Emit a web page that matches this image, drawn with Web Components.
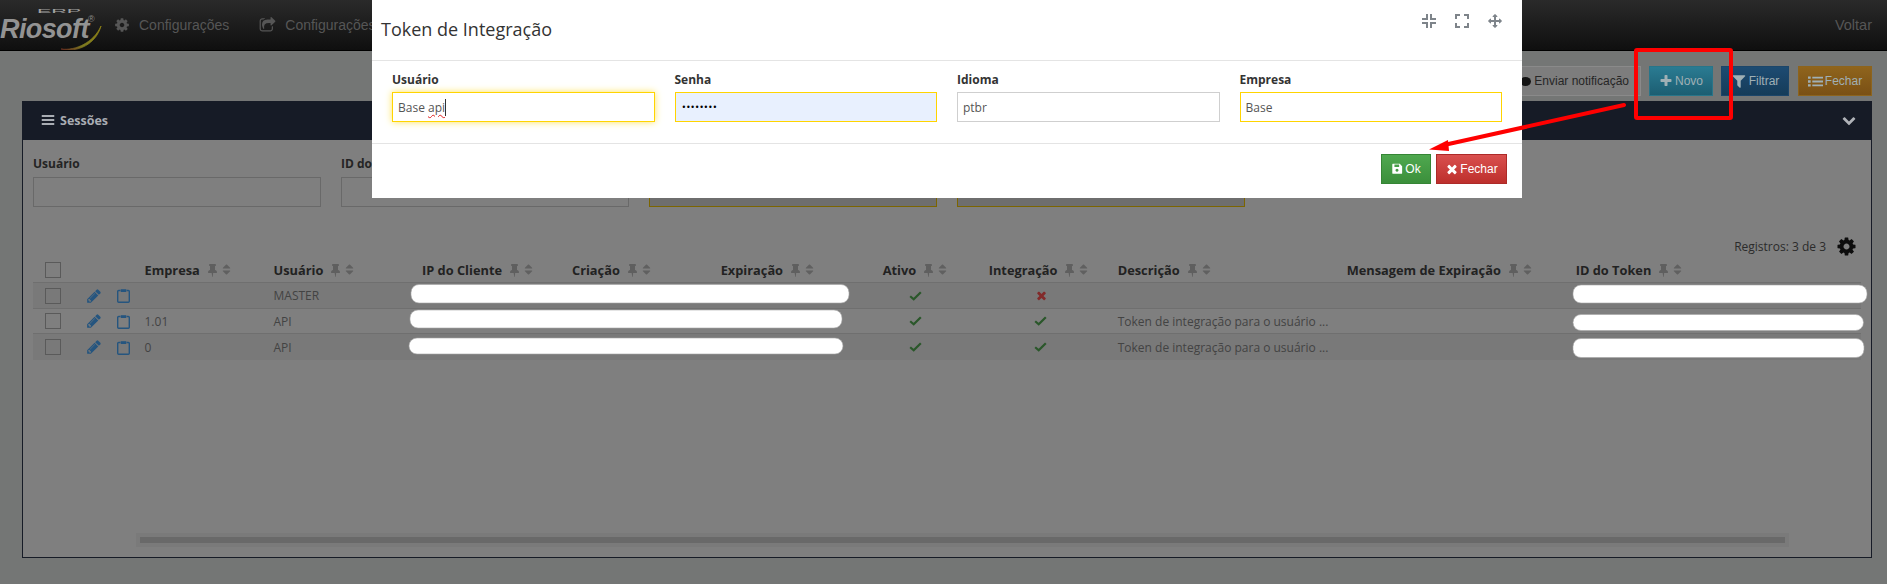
<!DOCTYPE html>
<html lang="pt-BR">
<head>
<meta charset="utf-8">
<title>Sessões</title>
<style>
    html, body { margin: 0; padding: 0; height: 100%; overflow: hidden; background: #747675; }
    body { font-family: "Open Sans", "Liberation Sans", sans-serif; }
    erp-app { display: block; }
</style>
</head>
<body>
<erp-app></erp-app>
<token-modal></token-modal>
<markup-layer></markup-layer>

<script>
    // FontAwesome-ish glyphs, [viewBox width, path]
const GLYPHS = {
    cog: [1792, "M1152 896q0-106-75-181t-181-75-181 75-75 181 75 181 181 75 181-75 75-181zm512-109v222q0 12-8 23t-20 13l-185 28q-19 54-39 91 35 50 107 138 10 12 10 25t-9 23q-27 37-99 108t-94 71q-12 0-26-9l-138-108q-44 23-91 38-16 136-29 186-7 28-36 28h-222q-14 0-24.500-8.500t-11.500-21.500l-28-184q-49-16-90-37l-141 107q-10 9-25 9-14 0-25-11-126-114-165-168-7-10-7-23 0-12 8-23 15-21 51-66.500t54-70.500q-27-50-41-99l-183-27q-13-2-21-12.500t-8-23.500v-222q0-12 8-23t19-13l186-28q14-46 39-92-40-57-107-138-10-12-10-24 0-10 9-23 26-36 98.500-107.500t94.500-71.500q13 0 26 10l138 107q44-23 91-38 16-136 29-186 7-28 36-28h222q14 0 24.500 8.500t11.500 21.500l28 184q49 16 90 37l142-107q9-9 24-9 13 0 25 10 129 119 165 170 7 8 7 22 0 12-8 23-15 21-51 66.500t-54 70.500q26 50 41 98l183 28q13 2 21 12.500t8 23.500z"],
    share: [1792, "M1472 989v259q0 119-84.500 203.500t-203.500 84.500h-832q-119 0-203.500-84.500t-84.500-203.500v-832q0-119 84.500-203.500t203.500-84.500h255q13 0 22.500 9.500t9.500 22.500q0 27-26 32-77 26-133 60-10 4-16 4h-112q-66 0-113 47t-47 113v832q0 66 47 113t113 47h832q66 0 113-47t47-113v-214q0-19 18-29 28-13 54-37 16-16 35-8 21 9 21 29zm237-496l-384 384q-18 19-45 19-12 0-25-5-39-17-39-59v-192h-160q-323 0-438 131-119 137-74 473 3 23-20 34-8 2-12 2-16 0-26-13-10-14-21-31t-39.500-68.500-49.500-99.500-38.500-114-17.500-122q0-49 3.500-91t14-90 28-88 47-81.500 68.500-74 94.500-61.500 124.500-48.500 159.500-30.500 196.500-11h160v-192q0-42 39-59 13-5 25-5 26 0 45 19l384 384q19 19 19 45t-19 45z"],
    pencil: [1792, "M491 1536l91-91-235-235-91 91v107h128v128h107zm523-928q0-22-22-22-10 0-17 7l-542 542q-7 7-7 17 0 22 22 22 10 0 17-7l542-542q7-7 7-17zm-54-192l416 416-832 832h-416v-416zm683 96q0 53-37 90l-166 166-416-416 166-165q36-38 90-38 53 0 91 38l235 234q37 39 37 91z"],
    times: [1792, "M1490 1322q0 40-28 68l-136 136q-28 28-68 28t-68-28l-294-294-294 294q-28 28-68 28t-68-28l-136-136q-28-28-28-68t28-68l294-294-294-294q-28-28-28-68t28-68l136-136q28-28 68-28t68 28l294 294 294-294q28-28 68-28t68 28l136 136q28 28 28 68t-28 68l-294 294 294 294q28 28 28 68z"],
    filter: [1792, "M1595 295q17 41-14 70l-493 493v742q0 42-39 59-13 5-25 5-27 0-45-19l-256-256q-19-19-19-45v-486l-493-493q-31-29-14-70 17-39 59-39h1280q42 0 59 39z"],
    chevron: [1792, "M1683 808l-742 741q-19 19-45 19t-45-19l-742-741q-19-19-19-45.500t19-45.500l166-165q19-19 45-19t45 19l531 531 531-531q19-19 45-19t45 19l166 165q19 19 19 45.500t-19 45.500z"],
    pin: [1152, "M1152 1216q0 26-19 45t-45 19h-429l-51 483q-2 12-10.500 20.500t-20.500 8.500h-1q-27 0-32-27l-76-485h-404q-26 0-45-19t-19-45q0-123 78.500-221.500t177.500-98.500v-512q-52 0-90-38t-38-90 38-90 90-38h640q52 0 90 38t38 90-38 90-90 38v512q99 0 177.500 98.500t78.500 221.500z"],
    sort: [1792, "M1408 1088q0 26-19 45l-448 448q-19 19-45 19t-45-19l-448-448q-19-19-19-45t19-45 45-19h896q26 0 45 19t19 45zm0-384q0 26-19 45t-45 19h-896q-26 0-45-19t-19-45 19-45l448-448q19-19 45-19t45 19l448 448q19 19 19 45z"],
    arrows: [1792, "M1792 896q0 26-19 45l-256 256q-19 19-45 19t-45-19-19-45v-128h-384v384h128q26 0 45 19t19 45-19 45l-256 256q-19 19-45 19t-45-19l-256-256q-19-19-19-45t19-45 45-19h128v-384h-384v128q0 26-19 45t-45 19-45-19l-256-256q-19-19-19-45t19-45l256-256q19-19 45-19t45 19 19 45v128h384v-384h-128q-26 0-45-19t-19-45 19-45l256-256q19-19 45-19t45 19l256 256q19 19 19 45t-19 45-45 19h-128v384h384v-128q0-26 19-45t45-19 45 19l256 256q19 19 19 45z"],
    save: [1792, "M256 128h1056l352 352v1056q0 64-64 64H256q-64 0-64-64V192q0-64 64-64zm256 96v352q0 32 32 32h640q32 0 32-32V224zm384 640a224 224 0 1 0 .1 0z"],
    plus: [1792, "M1600 736v192q0 40-28 68t-68 28h-416v416q0 40-28 68t-68 28h-192q-40 0-68-28t-28-68v-416h-416q-40 0-68-28t-28-68v-192q0-40 28-68t68-28h416v-416q0-40 28-68t68-28h192q40 0 68 28t28 68v416h416q40 0 68 28t28 68z"],
    list: [1792, "M0 288h320v288H0zM512 320h1280v224H512zM0 752h320v288H0zM512 784h1280v224H512zM0 1216h320v288H0zM512 1248h1280v224H512z"],
    bars: [1792, "M96 256h1600v256H96zM96 768h1600v256H96zM96 1280h1600v256H96z"]
}

class FaIcon extends HTMLElement {
    constructor() {
        super();
        this.attachShadow({mode: "open"})
        let [w, d] = GLYPHS[this.getAttribute("name")]
        let size = this.getAttribute("size") || 14
        let width = size * w / 1792
        this.shadowRoot.innerHTML = `
        <style>
            :host { display: inline-flex; color: inherit; flex: none; }
            svg { display: block; fill: currentColor; }
        </style>
        <svg width="${width}" height="${size}" viewBox="0 0 ${w} 1792"><path fill-rule="evenodd" d="${d}"/></svg>`
    }
}
customElements.define("fa-icon", FaIcon);

class ErpTopbar extends HTMLElement {
    constructor() {
        super();
        this.attachShadow({mode: "open"})
        this.shadowRoot.innerHTML = `
        <style>
            :host {
                display: flex;
                align-items: center;
                height: 50px;
                border-bottom: 1px solid #000;
                background: linear-gradient(#2a2a2a, #0f0f0f);
                font: 14px "Liberation Sans", Arial, sans-serif;
                color: #565656;
                overflow: hidden;
            }
            #logo { position: relative; width: 114px; height: 50px; flex: none; overflow: hidden; }
            #name {
                position: absolute; left: 0; top: 15px;
                font: italic bold 27px/28px "Liberation Sans", Arial, sans-serif;
                letter-spacing: -0.6px;
                color: #939393;
            }
            #reg { position: absolute; left: 88px; top: 14px; font: 9px/10px "Liberation Sans", Arial, sans-serif; color: #8a8a8a; }
                /* the wide ERP over the name, only a few px tall */
            #erp {
                position: absolute; left: 37px; top: 9px;
                font: 5px/5px "Liberation Sans", Arial, sans-serif;
                color: #a0a0a0;
                transform: scaleX(4.300);
                transform-origin: left center;
            }
            #swoosh { position: absolute; left: 58px; top: 24px; }
            .nav { display: flex; align-items: center; gap: 9px; }
            #n1 { margin-right: 30px; }
            #back { margin-left: auto; margin-right: 15px; font-size: 14.500px; }
        </style>
        <div id="logo">
            <span id="erp">ERP</span>
            <span id="name">Riosoft</span>
            <span id="reg">®</span>
            <svg id="swoosh" width="46" height="28" viewBox="0 0 46 28">
                <defs><linearGradient id="sw" x1="0" x2="1" y1="1" y2="0">
                    <stop offset="0" stop-color="#6a2a20"/>
                    <stop offset="0.35" stop-color="#7d7a20"/>
                    <stop offset="1" stop-color="#8f8212"/>
                </linearGradient></defs>
                <path d="M3 25C18 27 36 18 43 2C38 20 20 29 3 25Z" fill="url(#sw)" stroke="url(#sw)" stroke-width=".8"/>
            </svg>
        </div>
        <div class="nav" id="n1"><fa-icon name="cog" size="16"></fa-icon><span>Configurações</span></div>
        <div class="nav" id="n2"><fa-icon name="share" size="17"></fa-icon><span>Configurações</span></div>
        <span id="back">Voltar</span>`
    }
}
customElements.define("erp-topbar", ErpTopbar);

    // top = gradient start, bottom = gradient end
class ErpButton extends HTMLElement {
    constructor() {
        super();
        this.attachShadow({mode: "open"})
        let top = this.getAttribute("top") || "#7f7f7f"
        let bottom = this.getAttribute("bottom") || top
        let border = this.getAttribute("border") || bottom
        this.shadowRoot.innerHTML = `
        <style>
            :host {
                display: inline-flex;
                align-items: center;
                justify-content: center;
                gap: 2px;
                box-sizing: border-box;
                height: 30px;
                padding: 0 9px;
                border: 1px solid ${border};
                background: linear-gradient(${top}, ${bottom});
                color: var(--btn-color, #a0b0b5);
                font: 12px "Liberation Sans", Arial, sans-serif;
                white-space: nowrap;
            }
        </style>
        <slot></slot>`
    }
}
customElements.define("erp-button", ErpButton);

class FilterField extends HTMLElement {
    constructor() {
        super();
        this.attachShadow({mode: "open"})
        let yellow = this.hasAttribute("required")
        this.shadowRoot.innerHTML = `
        <style>
            :host { display: block; }
            label { display: block; height: 22px; font: 700 12px/18px "Open Sans", sans-serif; color: #242424; }
            div {
                box-sizing: border-box; height: 30px;
                border: 1px solid ${yellow ? "#7c6500" : "#696969"};
                background: ${yellow ? "#6e6e6e" : "#7f7f7f"};
            }
        </style>
        <label>${this.getAttribute("label") || ""}</label>
        <div></div>`
    }
}
customElements.define("filter-field", FilterField);

const COLS = "52.500px 31px 28px 129px 148.500px 150px 148.700px 162px 106px 129px 229px 229px 285.300px"
const HEADERS = ["Empresa", "Usuário", "IP do Cliente", "Criação", "Expiração", "Ativo", "Integração", "Descrição", "Mensagem de Expiração", "ID do Token"]
const ROWS = [
    {empresa: "", usuario: "MASTER", ativo: true, integ: false, desc: ""},
    {empresa: "1.01", usuario: "API", ativo: true, integ: true, desc: "Token de integração para o usuário ..."},
    {empresa: "0", usuario: "API", ativo: true, integ: true, desc: "Token de integração para o usuário ..."}
]
const CHECK = `<svg class="ok" width="13" height="10" viewBox="0 0 13 10"><path d="M1.200 5.200L4.700 8.300L11.800 1.200" fill="none" stroke="#2a572a" stroke-width="2.200"/></svg>`
const CLIP = `<svg width="13" height="15" viewBox="0 0 13 15"><path d="M3.500 2.500H1.700a1 1 0 0 0-1 1V13.300a1 1 0 0 0 1 1H11.300a1 1 0 0 0 1-1V3.500a1 1 0 0 0-1-1H9.500" fill="none" stroke="#25557f" stroke-width="1.400"/><path d="M3.800 1.200H9.200V4H3.800z" fill="#25557f"/></svg>`

class DataGrid extends HTMLElement {
    constructor() {
        super();
        this.attachShadow({mode: "open"})
        let head = HEADERS.map(h => `
            <div class="th"><span>${h}</span><fa-icon class="pin" name="pin" size="14"></fa-icon><fa-icon class="srt" name="sort" size="13"></fa-icon></div>`).join("")
        let body = ROWS.map((r, i) => `
            <div class="row r${i} ${i % 2 ? "" : "odd"}">
                <div class="c0"><i class="box"></i></div>
                <div class="act"><fa-icon name="pencil" size="16"></fa-icon></div>
                <div class="act">${CLIP}</div>
                <div>${r.empresa}</div>
                <div>${r.usuario}</div>
                <div></div><div></div><div></div>
                <div class="ic26">${r.ativo ? CHECK : ""}</div>
                <div class="ic45">${r.integ ? CHECK : `<fa-icon class="no" name="times" size="13"></fa-icon>`}</div>
                <div>${r.desc}</div>
                <div></div><div></div>
            </div>`).join("")
        this.shadowRoot.innerHTML = `
        <style>
            :host { display: block; font: 12px "Open Sans", sans-serif; color: #434343; }
            .row { display: grid; grid-template-columns: ${COLS}; align-items: center; white-space: nowrap; }
            #head { height: 25px; border-bottom: 1px solid #6f6f6f; }
            .r0 { height: 25px; border-bottom: 1px solid #6f6f6f; }
            .r1 { height: 24px; border-bottom: 1px solid #6f6f6f; }
            .r2 { height: 26px; }
            .odd { background: #797979; }
            .th { display: flex; align-items: center; font-weight: 700; font-size: 12.800px; color: #222; }
            .pin { margin-left: 8px; color: #5f5f5f; }
            .srt { margin-left: 3px; color: #606060; }
            .c0 { padding-left: 12px; display: flex; }
            .box { display: block; box-sizing: border-box; width: 16px; height: 16px; border: 1px solid #5a5a5a; }
            .act { display: flex; color: #25557f; }
            .ic26 { padding-left: 26px; display: flex; }
            .ic45 { padding-left: 45px; display: flex; }
            .no { color: #822a2a; margin-left: 1px; }
        </style>
        <div class="row" id="head">
            <div class="c0"><i class="box"></i></div><div></div><div></div>${head}
        </div>
        ${body}`
    }
}
customElements.define("data-grid", DataGrid);

class DataPanel extends HTMLElement {
    constructor() {
        super();
        this.attachShadow({mode: "open"})
        this.shadowRoot.innerHTML = `
        <style>
            :host {
                display: flex;
                flex-direction: column;
                box-sizing: border-box;
                height: 457px;
                border: 1px solid #161b26;
                background: #7f7f7f;
            }
            #hd {
                display: flex; align-items: center; gap: 5px; flex: none;
                box-sizing: border-box;
                height: 38px;
                padding: 0 15px 2px 18px;
                background: #161b26;
                color: #a9adb3;
                font: 700 12.500px "Open Sans", sans-serif;
            }
            #hd .ch { margin-left: auto; color: #b0b3b8; }
            #bd { flex: 1; display: flex; flex-direction: column; padding: 15px 10px 10px; }
            #filters { display: grid; grid-template-columns: repeat(4, 288px); gap: 20px; }
            #count {
                display: flex; align-items: center; justify-content: flex-end; gap: 10px;
                margin-top: 28px; height: 22px; padding-right: 4px;
                font-size: 12px; color: #2b2b2b;
            }
            #count fa-icon { color: #0d0d0d; }
            #track {
                margin-top: auto; margin-left: 103px;
                width: 1653px; height: 14px;
                box-sizing: border-box; padding: 4px;
                background: #7a7a7a;
            }
            #thumb { height: 6px; background: #696969; }
        </style>
        <div id="hd"><fa-icon name="bars" size="14"></fa-icon><span>Sessões</span><fa-icon class="ch" name="chevron" size="14"></fa-icon></div>
        <div id="bd">
            <div id="filters">
                <filter-field label="Usuário"></filter-field>
                <filter-field label="ID do Token"></filter-field>
                <filter-field label="Criação" required></filter-field>
                <filter-field label="Expiração" required></filter-field>
            </div>
            <div id="count"><span>Registros: 3 de 3</span><fa-icon name="cog" size="21"></fa-icon></div>
            <data-grid></data-grid>
            <div id="track"><div id="thumb"></div></div>
        </div>`
    }
}
customElements.define("data-panel", DataPanel);

class ErpApp extends HTMLElement {
    constructor() {
        super();
        this.attachShadow({mode: "open"})
        this.shadowRoot.innerHTML = `
        <style>
            :host { display: block; }
            main { padding: 15px 15px 0 22px; }
            #tools { display: flex; justify-content: flex-end; gap: 8px; margin-bottom: 5px; }
            #send { --btn-color: #262626; gap: 3px; padding: 0 11px 0 9px; }
            .dot { width: 11px; height: 9px; border-radius: 50%; background: #141414; }
        </style>
        <erp-topbar></erp-topbar>
        <main>
            <div id="tools">
                <erp-button id="send" top="#7d7d7d" border="#8a8a8a"><i class="dot"></i>Enviar notificação</erp-button>
                <erp-button top="#2a7b92" bottom="#1c5e72" border="#287589" style="width:64px"><fa-icon name="plus" size="14"></fa-icon>Novo</erp-button>
                <erp-button top="#1d4b72" bottom="#153c59" border="#1c466a" style="width:68px"><fa-icon name="filter" size="16"></fa-icon>Filtrar</erp-button>
                <erp-button top="#8f641d" bottom="#7a5014" border="#8d641d" style="width:74px;margin-left:1px"><fa-icon name="list" size="15"></fa-icon>Fechar</erp-button>
            </div>
            <data-panel></data-panel>
        </main>`
    }
}
customElements.define("erp-app", ErpApp);

class ModalField extends HTMLElement {
    constructor() {
        super();
        this.attachShadow({mode: "open"})
        this.shadowRoot.innerHTML = `
        <style>
            :host { display: block; }
            label { display: block; height: 21px; font: 700 12px/18px "Open Sans", sans-serif; color: #333; }
            #box {
                box-sizing: border-box; height: 30px;
                display: flex; align-items: center;
                padding: 0 5px;
                border: 1px solid var(--line, #cfcfcf);
                background: var(--fill, #fff);
                box-shadow: var(--glow, none);
                font: 12px "Open Sans", sans-serif;
                color: #555;
            }
        </style>
        <label>${this.getAttribute("label")}</label>
        <div id="box"><slot></slot></div>`
    }
}
customElements.define("modal-field", ModalField);

class TokenModal extends HTMLElement {
    constructor() {
        super();
        this.attachShadow({mode: "open"})
        this.shadowRoot.innerHTML = `
        <style>
            :host {
                position: fixed; inset: 0;
                display: block;
                padding-left: 372px;
            }
            #dlg { width: 1150px; height: 198px; background: #fff; display: flex; flex-direction: column; }
            header {
                display: flex; align-items: center;
                box-sizing: border-box; height: 61px;
                padding: 0 20px 2px 9px;
                border-bottom: 1px solid #e4e4e4;
            }
            h4 { margin: 0; font: 400 18px "Open Sans", sans-serif; color: #333; }
            #tools { margin: -16px 0 0 auto; display: flex; align-items: center; gap: 19px; color: #7e848a; }
            #tools svg { display: block; }
            section {
                display: grid; grid-template-columns: repeat(4, 262.500px); gap: 20px;
                box-sizing: border-box; height: 83px;
                padding: 10px 20px 0;
                border-bottom: 1px solid #e4e4e4;
            }
            .y { --line: #ffd400; }
            #u { --glow: 0 0 7px #ffe35a; }
            #s { --fill: #e8f0fe; }
            .api { text-decoration: underline wavy #e02020 1px; text-underline-offset: 2px; }
            .caret { display: inline-block; width: 1px; height: 17px; background: #333; vertical-align: middle; }
            .dots { margin-left: 1px; color: #000; font-size: 8px; letter-spacing: -0.3px; font-family: "DejaVu Sans", sans-serif; }
            footer { display: flex; justify-content: flex-end; gap: 5px; padding: 10px 15px 0 0; }
            .ok { --btn-color: #fff; }
            .no { --btn-color: #fff; gap: 1px; }
        </style>
        <div id="dlg">
            <header>
                <h4>Token de Integração</h4>
                <div id="tools">
                    <svg width="14" height="14" viewBox="0 0 14 14" fill="none" stroke="currentColor" stroke-width="2"><path d="M5 0V5H0M9 0V5H14M5 14V9H0M9 14V9H14"/></svg>
                    <svg width="14" height="14" viewBox="0 0 14 14" fill="none" stroke="currentColor" stroke-width="2"><path d="M5 1H1V5M9 1H13V5M5 13H1V9M9 13H13V9"/></svg>
                    <fa-icon name="arrows" size="14"></fa-icon>
                </div>
            </header>
            <section>
                <modal-field label="Usuário" class="y" id="u"><span>Base <span class="api">api</span></span><i class="caret"></i></modal-field>
                <modal-field label="Senha" class="y" id="s"><span class="dots">••••••••</span></modal-field>
                <modal-field label="Idioma">ptbr</modal-field>
                <modal-field label="Empresa" class="y">Base</modal-field>
            </section>
            <footer>
                <erp-button class="ok" top="#4fa84f" bottom="#3b8f3b" border="#358535" style="width:50px"><fa-icon name="save" size="12"></fa-icon>Ok</erp-button>
                <erp-button class="no" top="#d9504e" bottom="#bd2f2c" border="#ad2a28" style="width:71px"><fa-icon name="times" size="14"></fa-icon>Fechar</erp-button>
            </footer>
        </div>`
    }
}
customElements.define("token-modal", TokenModal);

    // Hand drawn marks over the screenshot: redaction pills, red box and arrow
class MarkupLayer extends HTMLElement {
    constructor() {
        super();
        this.attachShadow({mode: "open"})
        let pills = [
            [411, 284.500, 438, 18.500], [410, 310, 432, 18], [409, 338, 434, 16],
            [1573, 285, 294, 18], [1573, 314.500, 290.500, 16], [1573, 338.500, 291, 19]
        ].map(([x, y, w, h]) => `<rect x="${x}" y="${y}" width="${w}" height="${h}" rx="8" fill="#fff" stroke="#a5a5a5" stroke-width=".6"/>`).join("")
        this.shadowRoot.innerHTML = `
        <style>
            :host { position: fixed; inset: 0; display: block; pointer-events: none; }
            svg { display: block; }
        </style>
        <svg width="1887" height="584">
            ${pills}
            <rect x="1636" y="50" width="95" height="68" rx="1" fill="none" stroke="#f00" stroke-width="4"/>
            <path d="M1624 105L1444 145" stroke="#f00" stroke-width="4" stroke-linecap="round" fill="none"/>
            <path d="M1429 149.500L1448 140L1449 151Z" fill="#f00"/>
        </svg>`
    }
}
customElements.define("markup-layer", MarkupLayer);
</script>
</body>
</html>
